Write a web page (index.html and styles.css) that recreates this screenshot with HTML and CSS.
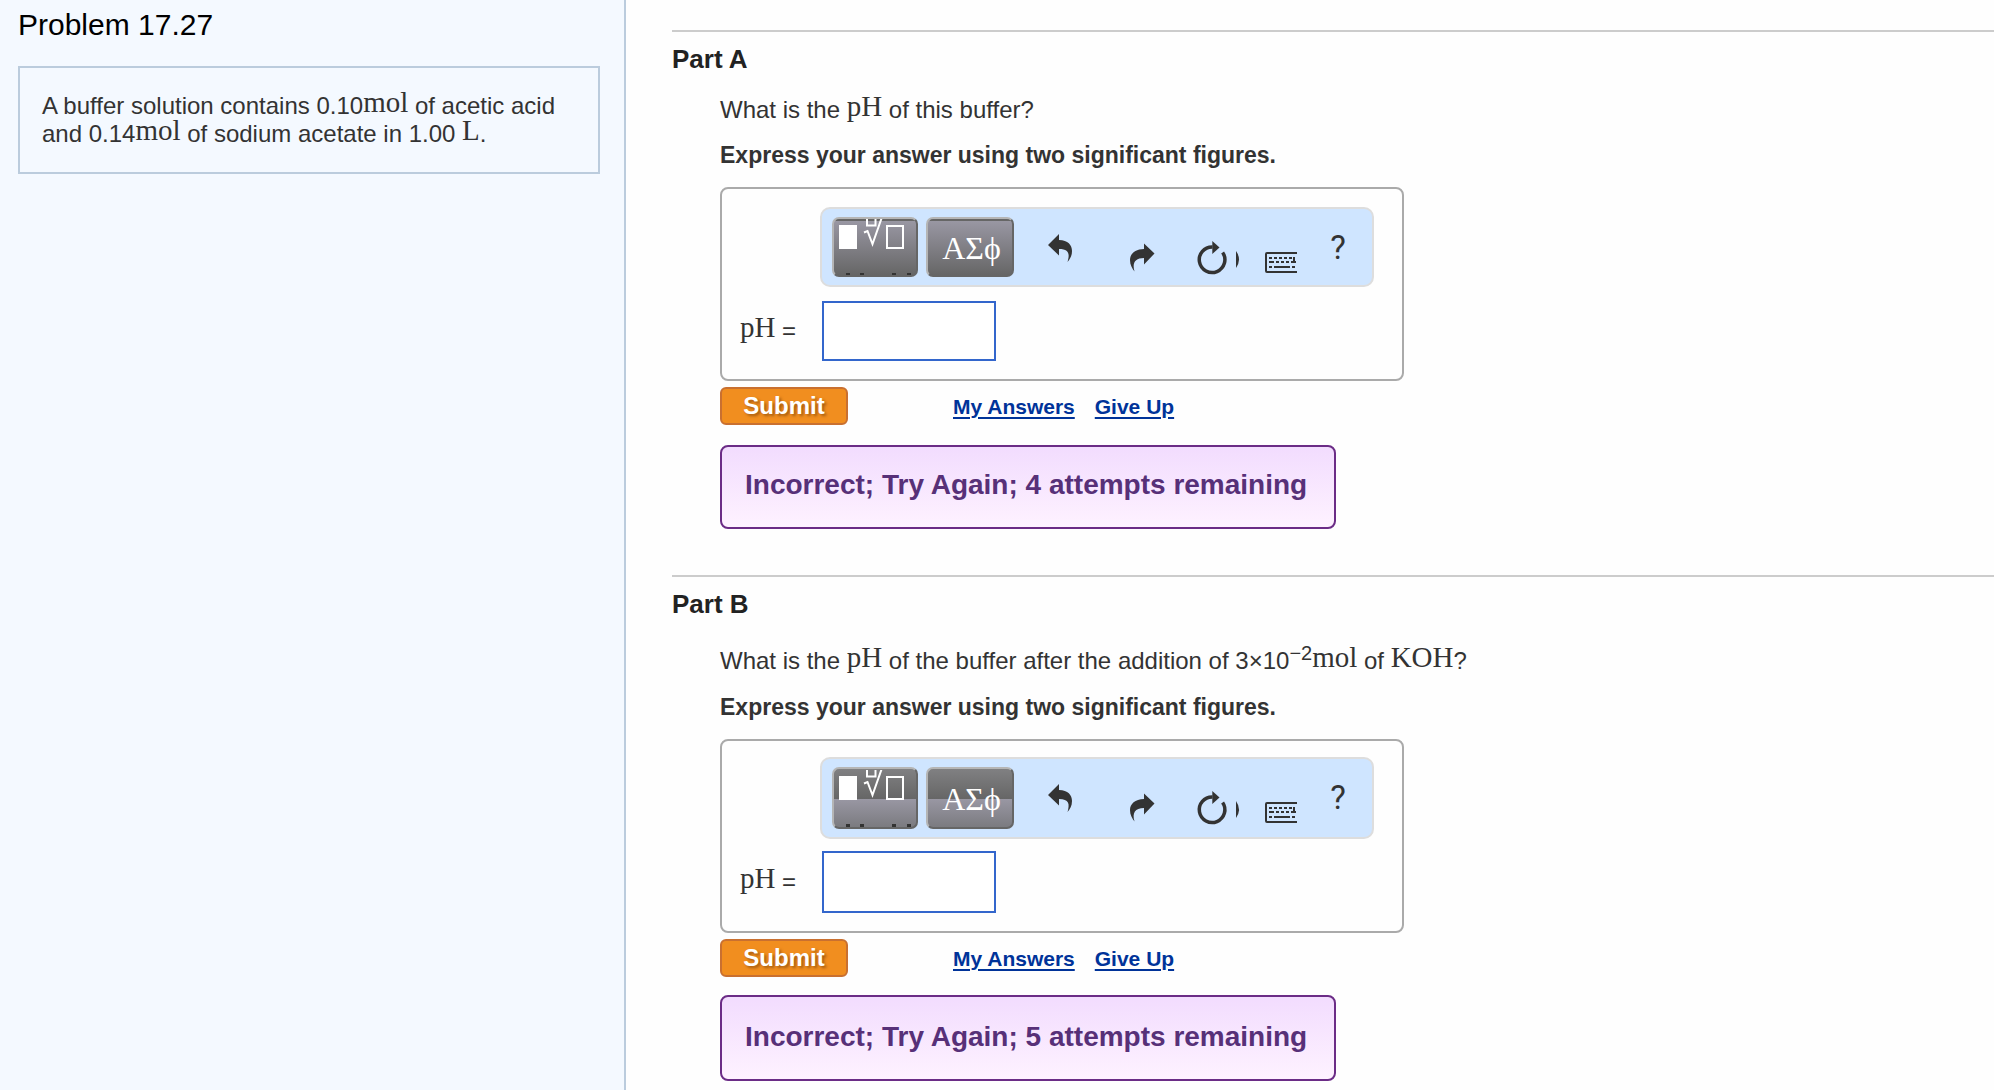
FILE: index.html
```html
<!DOCTYPE html>
<html lang="en">
<head>
    <meta charset="utf-8">
    <title>Problem 17.27</title>
    <link rel="stylesheet" href="styles.css">
</head>
<body>
<svg class="sprite" aria-hidden="true">
    <symbol id="templates" viewBox="0 0 82 60">
        <rect x="5" y="6" width="18" height="24" fill="#fff"/>
        <path d="M33 -2V6.500H41.500V-2M30 13.500L33.500 12L38.500 25L48 -2" fill="none" stroke="#fff" stroke-width="2"/>
        <rect x="53" y="7" width="16" height="22" fill="none" stroke="#fff" stroke-width="2"/>
        <path d="M12 54h4v4h-4zM26 54h4v4h-4zM58 54h4v4h-4zM73 54h4v4h-4z" fill="#333"/>
    </symbol>
    <symbol id="undo" viewBox="0 0 80 60">
        <path d="M28 28L39 17V23C48 23 52 28 52 34C52 39 50 42 47.500 45C50 37 49 32 39 32V38.500Z"/>
    </symbol>
    <symbol id="redo" viewBox="0 0 80 60">
        <path d="M54.500 36.500L44 26.500V32C35 32 30 37 30 43C30 48 32 51 34.500 54.500C32 46 35 41 44 41V47.500Z"/>
    </symbol>
    <symbol id="reset" viewBox="0 0 70 60">
        <path d="M32.500 29.900A12.800 12.800 0 1 0 42.600 35.400" fill="none" stroke="#333" stroke-width="3.500"/>
        <path d="M32.300 24L39.500 30.500L32.300 37Z"/>
        <path d="M56 34Q62 42.500 56 51Z"/>
    </symbol>
    <symbol id="keyboard" viewBox="0 0 60 60">
        <path d="M47 36H17Q16 36 16 37V54Q16 55 17 55H47" fill="none" stroke="#333" stroke-width="2"/>
        <path d="M19 41h3m2 0h3m2 0h3m2 0h3m2 0h3M19 45h5m2 0h3m2 0h3m2 0h3m2 0h5M19 50h3m2 0h16m2 0h3" fill="none" stroke="#333" stroke-width="2"/>
        <path d="M44 40V46" stroke="#333" stroke-width="2"/>
    </symbol>
</svg>

<div class="page">
    <aside class="sidebar">
        <h1>Problem 17.27</h1>
        <div class="intro">
            A buffer solution contains 0.10<span class="math">mol</span> of acetic acid
            and 0.14<span class="math">mol</span> of sodium acetate in 1.00 <span class="math">L</span>.
        </div>
    </aside>

    <main class="main">
        <section class="part">
            <h2>Part A</h2>
            <form class="part-body">
                <p class="question">What is the <span class="math">pH</span> of this buffer?</p>
                <p class="instruction">Express your answer using two significant figures.</p>
                <div class="answer">
                    <div class="toolbar">
                        <button type="button" class="key templates" aria-label="Templates"><svg><use href="#templates"/></svg></button>
                        <button type="button" class="key symbols">ΑΣϕ</button>
                        <button type="button" class="tool" aria-label="Undo"><svg width="80"><use href="#undo"/></svg></button>
                        <button type="button" class="tool" aria-label="Redo"><svg width="80"><use href="#redo"/></svg></button>
                        <button type="button" class="tool" aria-label="Reset"><svg width="70"><use href="#reset"/></svg></button>
                        <button type="button" class="tool" aria-label="Keyboard"><svg width="60"><use href="#keyboard"/></svg></button>
                        <button type="button" class="tool help">?</button>
                    </div>
                    <label for="ph-a"><span class="math">pH</span> =</label>
                    <input type="text" id="ph-a">
                </div>
                <div class="actions">
                    <button type="submit" class="submit">Submit</button>
                    <a href="#">My Answers</a>
                    <a href="#">Give Up</a>
                </div>
                <div class="feedback">Incorrect; Try Again; 4 attempts remaining</div>
            </form>
        </section>

        <section class="part part-b">
            <h2>Part B</h2>
            <form class="part-body">
                <p class="question">What is the <span class="math">pH</span> of the buffer after the addition of 3×10<sup>−2</sup><span class="math">mol</span> of <span class="math">KOH</span>?</p>
                <p class="instruction">Express your answer using two significant figures.</p>
                <div class="answer">
                    <div class="toolbar">
                        <button type="button" class="key templates" aria-label="Templates"><svg><use href="#templates"/></svg></button>
                        <button type="button" class="key symbols">ΑΣϕ</button>
                        <button type="button" class="tool" aria-label="Undo"><svg width="80"><use href="#undo"/></svg></button>
                        <button type="button" class="tool" aria-label="Redo"><svg width="80"><use href="#redo"/></svg></button>
                        <button type="button" class="tool" aria-label="Reset"><svg width="70"><use href="#reset"/></svg></button>
                        <button type="button" class="tool" aria-label="Keyboard"><svg width="60"><use href="#keyboard"/></svg></button>
                        <button type="button" class="tool help">?</button>
                    </div>
                    <label for="ph-b"><span class="math">pH</span> =</label>
                    <input type="text" id="ph-b">
                </div>
                <div class="actions">
                    <button type="submit" class="submit">Submit</button>
                    <a href="#">My Answers</a>
                    <a href="#">Give Up</a>
                </div>
                <div class="feedback">Incorrect; Try Again; 5 attempts remaining</div>
            </form>
        </section>
    </main>
</div>
</body>
</html>
```
FILE: styles.css
```css
* {
    box-sizing: border-box;
}
body {
    margin: 0;
    background-color: #fefefe;
    color: #333;
    font-family: "Liberation Sans", Arial, sans-serif;
    font-size: 24px;
    line-height: 28px;
}
h1, h2, p {
    margin: 0;
}
button {
    font-family: inherit;
    cursor: pointer;
}
.sprite {
    display: none;
}
.page {
    display: flex;
    min-height: 100vh;
}

/* left column */
.sidebar {
    flex: 0 0 626px;
    padding: 8px 24px 0 18px;
    background-color: #f4f9ff;
    border-right: 2px solid #bbccdd;
}
.sidebar h1 {
    margin-bottom: 24px;
    color: #000;
    font-size: 30px;
    font-weight: normal;
    line-height: 34px;
}
.intro {
    padding: 24px 22px;
    border: 2px solid #bbccdd;
}
.math {
    font-family: "Liberation Serif", "Times New Roman", serif;
    font-size: 29px;
    line-height: 20px;
    vertical-align: 2px;
}
sup {
    font-size: 20px;
    line-height: 10px;
    vertical-align: 9px;
}

/* parts */
.main {
    flex: 1;
    padding: 30px 0 0 46px;
}
.part {
    padding: 12px 0 46px;
    border-top: 2px solid #ccc;
}
.part h2 {
    color: #222;
    font-size: 26px;
    line-height: 30px;
}
.part-body {
    padding-left: 48px;
}
.question {
    margin: 22px 0 17px;
}
.instruction {
    margin-bottom: 18px;
    font-size: 23px;
    font-weight: bold;
}
.answer {
    display: grid;
    grid-template-columns: 80px auto;
    row-gap: 14px;
    width: fit-content;
    padding: 18px 28px 18px 18px;
    border: 2px solid #aaa;
    border-radius: 8px;
}
.answer label {
    align-self: center;
    white-space: nowrap;
}
.answer input {
    width: 174px;
    height: 60px;
    margin-left: 2px;
    padding: 0 12px;
    border: 2px solid #36c;
    background-color: #fff;
    font-size: 24px;
}

/* toolbar */
.toolbar {
    grid-column: 2;
    display: flex;
    padding: 8px 0 8px 10px;
    background-color: #cfe5ff;
    border: 2px solid #ddd;
    border-radius: 10px;
}
.key {
    height: 60px;
    margin-right: 8px;
    padding: 0;
    background: linear-gradient(#666 2px, #9997a3 2px, #666);
    border: 2px solid;
    border-color: #b5b5b5 #666 #666 #b5b5b5;
    border-radius: 7px;
    color: #fff;
}
.templates {
    width: 86px;
    overflow: hidden;
}
.templates svg {
    display: block;
    width: 82px;
    height: 60px;
    margin-bottom: -4px;
}
.symbols {
    width: 88px;
    padding: 2px 0 0 3px;
    margin-right: 6px;
    font-family: "Liberation Serif", "Times New Roman", serif;
    font-size: 32px;
}
.tool {
    height: 60px;
    padding: 0;
    background: none;
    border: none;
    color: #333;
}
.tool svg {
    display: block;
    height: 60px;
    fill: #333;
}
.help {
    width: 62px;
    padding: 0 6px 0 0;
    font-family: Roboto, sans-serif;
    font-size: 33px;
}

/* submit row */
.actions {
    display: flex;
    align-items: center;
    gap: 20px;
    margin-top: 6px;
}
.actions a {
    padding-top: 2px;
    color: #039;
    font-size: 21px;
    font-weight: bold;
    text-decoration-thickness: 2px;
    text-underline-offset: 3px;
}
.submit {
    width: 128px;
    height: 38px;
    margin-right: 85px;
    padding: 0;
    background-color: #f18e1f;
    border: 2px solid #c97030;
    border-radius: 6px;
    color: #fff;
    font-size: 24px;
    font-weight: bold;
    text-shadow: 2px 2px 3px #a35a10;
}
.feedback {
    width: fit-content;
    min-width: 616px;
    margin-top: 20px;
    padding: 22px 23px 26px;
    background: linear-gradient(#f2dcfe, #fef2ff);
    border: 2px solid #6b2c86;
    border-radius: 8px;
    color: #573078;
    font-size: 28px;
    font-weight: bold;
    line-height: 32px;
}

/* second part is a little taller, with two-tone keys */
.part-b {
    padding-bottom: 0;
}
.part-b .question {
    margin: 28px 0 18px;
}
.part-b .answer {
    row-gap: 12px;
    padding-top: 16px;
}
.part-b .answer input {
    height: 62px;
}
.part-b .key {
    height: 62px;
    background: linear-gradient(#808082 0, #666 30px, #9997a3 30px, #7b7b80 100%);
}
.part-b .feedback {
    margin-top: 18px;
    padding-top: 24px;
}
```
